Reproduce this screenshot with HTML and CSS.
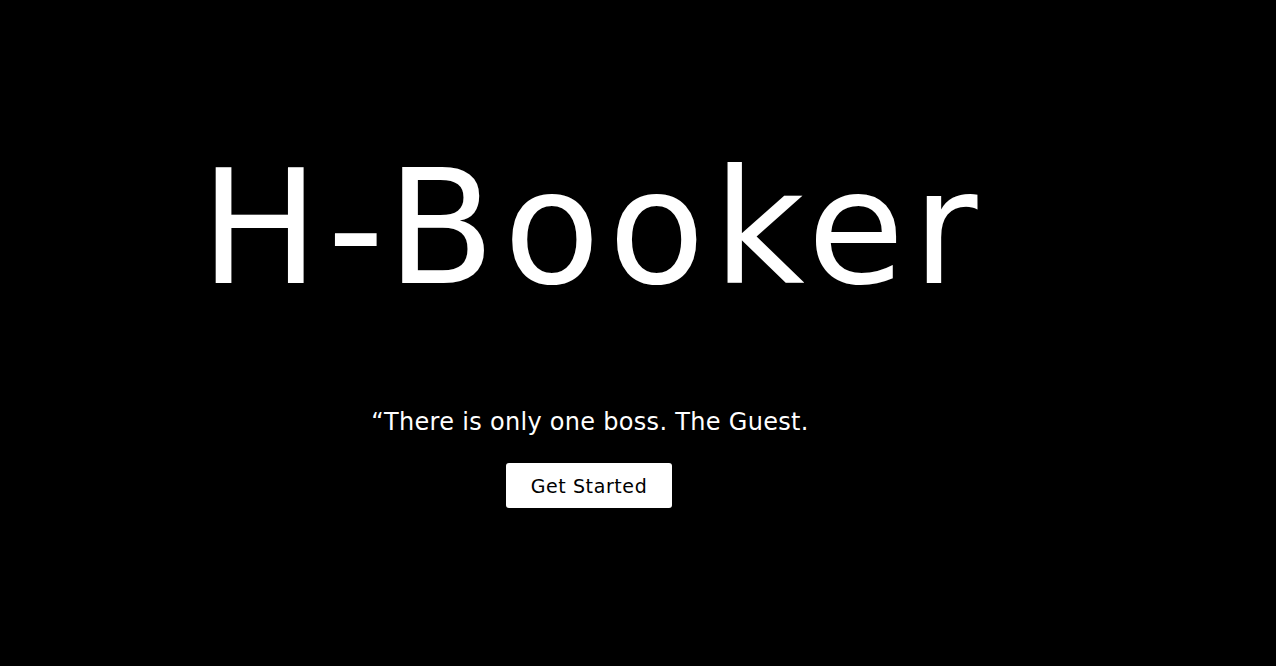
FILE: index.html
```html
<!DOCTYPE html>
<html lang="en">
<head>
<meta charset="utf-8">
<title>H-Booker</title>
<link rel="stylesheet" href="styles.css">
</head>
<body>
<main class="hero">
  <h1 class="title">H-Booker</h1>
  <p class="quote">“There is only one boss. The Guest.</p>
  <button class="cta">Get Started</button>
</main>
</body>
</html>
```
FILE: styles.css
```css
html, body {
  margin: 0;
  padding: 0;
  background: #000;
  height: 100%;
}
body {
  font-family: "DejaVu Sans", "Liberation Sans", sans-serif;
  color: #fff;
}
.hero {
  display: flex;
  flex-direction: column;
  align-items: center;
  padding-right: 96px;
  padding-top: 133px;
}
.title {
  margin: 0 0 0 6px;
  font-size: 158px;
  font-weight: normal;
  line-height: 190px;
  letter-spacing: 8.2px;
}
.quote {
  margin: 84px 0 0;
  font-size: 24px;
  line-height: 30px;
  font-weight: normal;
  letter-spacing: 0.3px;
}
.cta {
  margin: 26px 2px 0 0;
  width: 166px;
  height: 45px;
  background: #fff;
  color: #000;
  border: none;
  border-radius: 3px;
  font-family: "DejaVu Sans", "Liberation Sans", sans-serif;
  font-size: 19px;
  letter-spacing: 0.6px;
  padding: 0;
}
```
